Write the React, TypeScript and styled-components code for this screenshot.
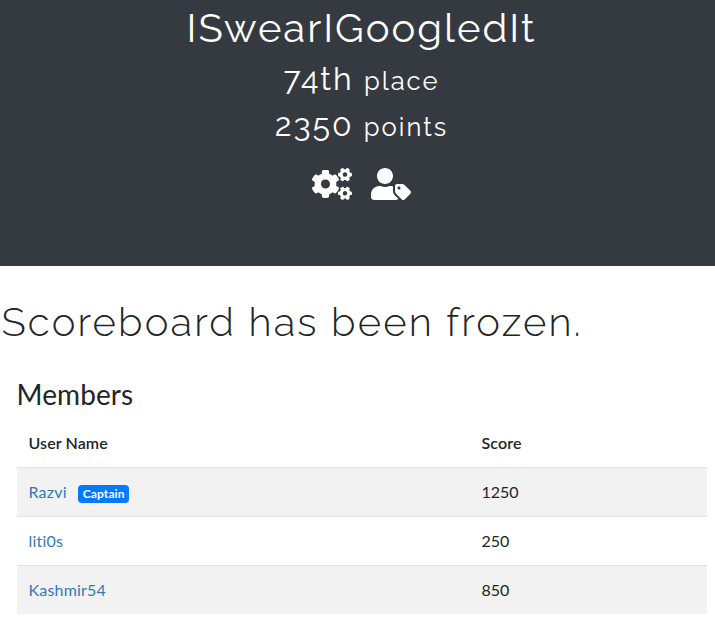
import React from 'react';
import styled, { createGlobalStyle } from 'styled-components';
import { FaCogs, FaUserTag } from 'react-icons/fa';

const GlobalStyle = createGlobalStyle`
  *, *::before, *::after { box-sizing: border-box; }
  body {
    margin: 0;
    background: #fff;
    color: #212529;
    font: 400 16px/24px Lato, sans-serif;
    font-variant-ligatures: none;
    overflow: hidden;
  }
`;

const Jumbotron = styled.header`
  height: 266px;
  padding: 4px 0 0 8px;
  background: #343a40;
  color: #fff;
  display: flex;
  flex-direction: column;
  align-items: center;
`;

const headingFont = `
  margin: 0;
  font-family: Raleway, Lato, sans-serif;
  white-space: nowrap;
`;

const TeamName = styled.h1`
  ${headingFont}
  font-size: 40px;
  line-height: 48px;
  font-weight: 400;
  letter-spacing: 2px;
`;

const Stat = styled.h2`
  ${headingFont}
  margin-top: 8px;
  font-size: 32px;
  line-height: 38px;
  font-weight: 400;
  letter-spacing: 2px;

  & + & { margin-top: 6px; }
`;

const Unit = styled.small`
  font-size: 25.6px;
`;

const Actions = styled.nav`
  display: flex;
  gap: 19px;
  margin-top: 22px;
`;

const Action = styled.a`
  display: block;
  width: 40px;
  height: 32px;
  color: #fff;
  svg { display: block; width: 40px; height: 32px; }
`;

const Notice = styled.h1`
  ${headingFont}
  margin: 32px 0 0 1.5px;
  font-size: 40px;
  line-height: 48px;
  font-weight: 340;
  letter-spacing: 2.17px;
`;

const Members = styled.section`
  margin: 31px 8px 0 17px;
`;

const Title = styled.h3`
  margin: 0 0 8px -0.5px;
  font-size: 28px;
  line-height: 34px;
  font-weight: 400;
  letter-spacing: 0.1px;
`;

const Table = styled.table`
  width: 100%;
  table-layout: fixed;
  border-collapse: collapse;
`;

const HeadCell = styled.th<{ $width?: number }>`
  width: ${(p) => (p.$width ? `${p.$width}px` : 'auto')};
  height: 48px;
  padding: 0 11.5px;
  text-align: left;
  font-weight: 600;
  letter-spacing: 0.1px;
`;

const Row = styled.tr`
  &:nth-child(odd) { background: #f2f2f2; }
`;

const Cell = styled.td`
  height: 49px;
  padding: 0 11.5px;
  border-top: 1px solid #dee2e6;
`;

const UserLink = styled.a`
  color: #337ab7;
  letter-spacing: 0.2px;
`;

const Badge = styled.span`
  display: inline-block;
  margin-left: 11.5px;
  padding: 3px 4.5px;
  border-radius: 4px;
  background: #007bff;
  color: #fff;
  font-size: 12px;
  line-height: 12px;
  font-weight: 700;
  letter-spacing: 0.12px;
`;

const members = [
  { name: 'Razvi', score: 1250, captain: true },
  { name: 'liti0s', score: 250 },
  { name: 'Kashmir54', score: 850 },
];

export default function App() {
  return (
    <>
      <GlobalStyle />
      <Jumbotron>
        <TeamName>ISwearIGoogledIt</TeamName>
        <Stat>74th <Unit>place</Unit></Stat>
        <Stat>2350 <Unit>points</Unit></Stat>
        <Actions>
          <Action aria-label="Team settings"><FaCogs /></Action>
          <Action aria-label="Choose captain"><FaUserTag /></Action>
        </Actions>
      </Jumbotron>
      <main>
        <Notice>Scoreboard has been frozen.</Notice>
        <Members>
          <Title>Members</Title>
          <Table>
            <thead>
              <tr>
                <HeadCell $width={453}>User Name</HeadCell>
                <HeadCell>Score</HeadCell>
              </tr>
            </thead>
            <tbody>
              {members.map((m) => (
                <Row key={m.name}>
                  <Cell>
                    <UserLink>{m.name}</UserLink>
                    {m.captain && <Badge>Captain</Badge>}
                  </Cell>
                  <Cell>{m.score}</Cell>
                </Row>
              ))}
            </tbody>
          </Table>
        </Members>
      </main>
    </>
  );
}
